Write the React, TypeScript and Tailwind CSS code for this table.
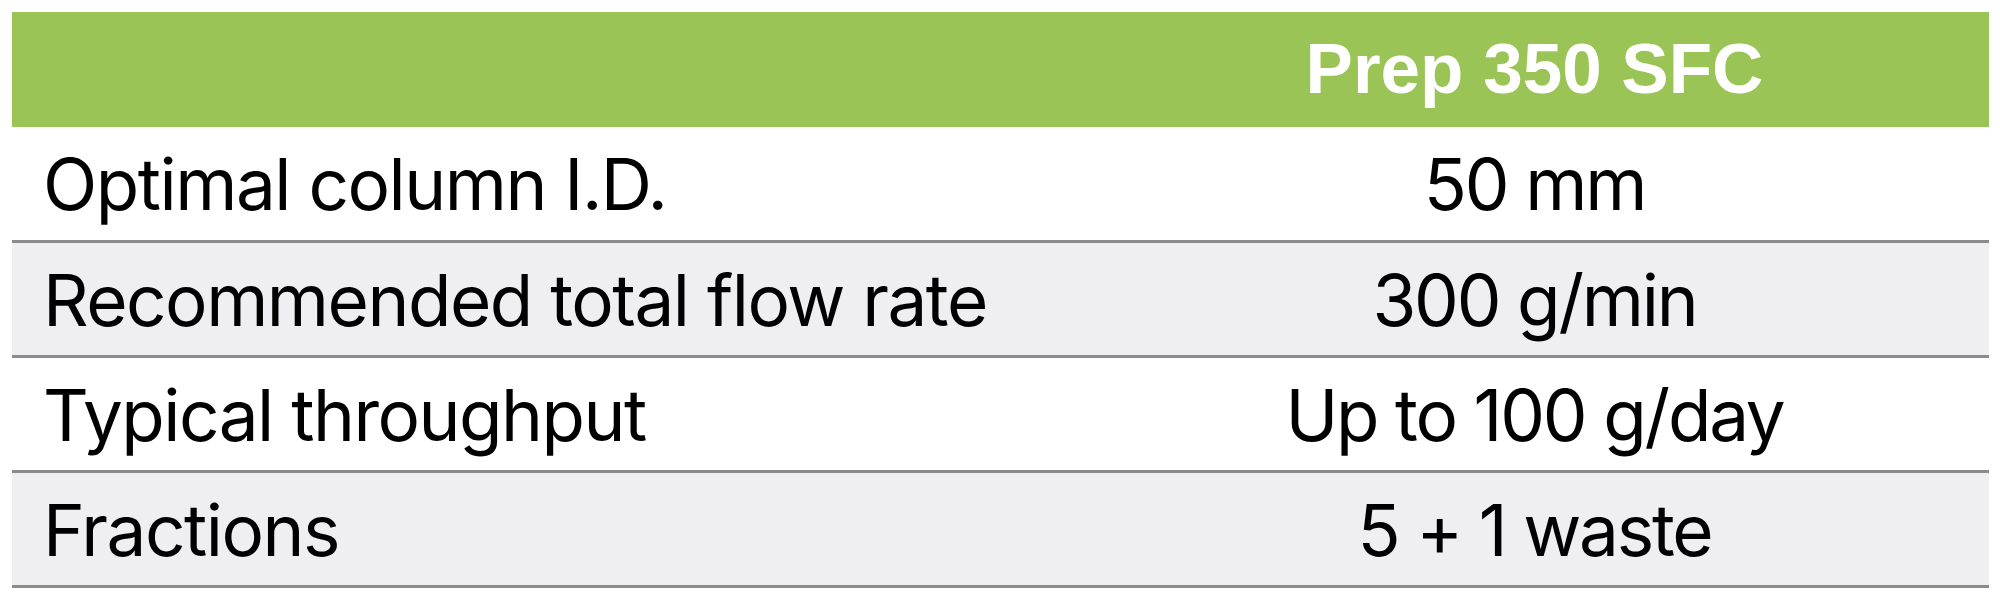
const rows = [
  { label: "Optimal column I.D.", value: "50 mm", shaded: false },
  { label: "Recommended total flow rate", value: "300 g/min", shaded: true },
  { label: "Typical throughput", value: "Up to 100 g/day", shaded: false },
  { label: "Fractions", value: "5 + 1 waste", shaded: true },
]

export default function App() {
  return (
    <div className="w-[2000px] h-[604px] bg-white pt-[12px] pl-[12px] pr-[11px]">
      <div className="w-full">
        {/* header */}
        <div className="grid grid-cols-[1068px_1fr] h-[115px] bg-[#9ac456]">
          <div />
          <div className="flex items-center justify-center pb-[2px]">
            <span className="font-['Liberation_Sans',Arial,sans-serif] font-bold text-[71px] leading-none text-white">
              Prep 350 SFC
            </span>
          </div>
        </div>

        {rows.map((row, i) => (
          <div
            key={i}
            className={`grid grid-cols-[1068px_1fr] border-b-[3px] border-[#8a8b8d] ${
              row.shaded ? "bg-[#efeff1]" : "bg-white"
            } ${i === 0 ? "h-[116px]" : "h-[115px]"}`}
          >
            <div className="flex items-center pl-[31px] pt-[2px]">
              <span className="font-['Inter',sans-serif] text-[71px] leading-none text-black tracking-[-1.5px]">
                {row.label}
              </span>
            </div>
            <div className="flex items-center justify-center pt-[2px]">
              <span className="font-['Inter',sans-serif] text-[71px] leading-none text-black tracking-[-2.2px]">
                {row.value}
              </span>
            </div>
          </div>
        ))}
      </div>
    </div>
  )
}
